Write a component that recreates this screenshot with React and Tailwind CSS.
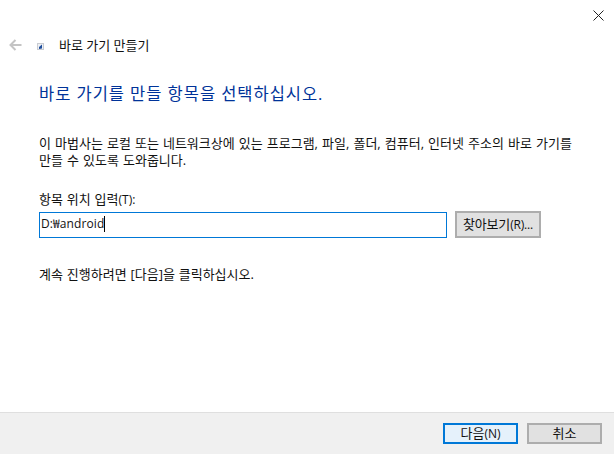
import React from "react";

const font = "font-['Open_Sans','Noto_Sans_CJK_KR',sans-serif]";

const App = () => {
  return (
    <div className={`w-[614px] h-[454px] bg-white flex flex-col text-[13px] leading-[17px] text-[#111] overflow-hidden ${font}`}>
      {/* close */}
      <div className="h-[30px] flex justify-end items-start pt-[10px] pr-[10px]">
        <svg width="11" height="11" viewBox="0 0 11 11" fill="none" stroke="#222" strokeWidth="1">
          <path d="M0.5 0.5L10.5 10.5M10.5 0.5L0.5 10.5" />
        </svg>
      </div>

      {/* title row */}
      <div className="h-[30px] flex items-center pl-[9px]">
        <svg width="13" height="12" viewBox="0 0 13 12" fill="none" stroke="#c4c4c4" strokeWidth="2">
          <path d="M12.5 6H2M6.5 1L1.5 6L6.5 11" />
        </svg>
        <svg className="ml-[15px] mt-[3px]" width="7" height="7" viewBox="0 0 7 7">
          <rect width="7" height="7" fill="#c9ccd2" />
          <rect x="1" y="1" width="5" height="5" fill="#eef0f4" />
          <path d="M2 6V4L5 1.5V5.5Z" fill="#1f4e9c" />
        </svg>
        <span className="ml-[15px]">바로 가기 만들기</span>
      </div>

      {/* body */}
      <div className="flex-1 pl-[39px] pr-[41px] pt-[24px]">
        <h1 className="text-[16.5px] leading-[20px] font-normal text-[#003399] tracking-[0.95px]">
          바로 가기를 만들 항목을 선택하십시오.
        </h1>
        <p className="mt-[31px] w-[540px] [word-spacing:0.7px]">
          이 마법사는 로컬 또는 네트워크상에 있는 프로그램, 파일, 폴더, 컴퓨터, 인터넷 주소의 바로 가기를 만들 수 있도록 도와줍니다.
        </p>
        <div className="mt-[22px] [word-spacing:0.5px]">
          항목 위치 입력<span className="text-[12px]">(T):</span>
        </div>
        <div className="mt-[3px] flex items-center gap-[8px]">
          <div className="w-[408px] h-[26px] border border-[#0078d7] flex items-center pl-[1px] pb-[2px] text-[12px]">
            <span className="tracking-[0.1px]">D:₩android</span>
            <span className="w-px h-[16px] bg-black" />
          </div>
          <button className="w-[86px] h-[27px] border-2 border-[#adadad] bg-[#e1e1e1] text-center leading-none tracking-[-0.2px]">
            찾아보기<span className="text-[12px]">(R)...</span>
          </button>
        </div>
        <p className="mt-[28px] [word-spacing:0.5px]">계속 진행하려면 [다음]을 클릭하십시오.</p>
      </div>

      {/* footer */}
      <div className="h-[42px] border-t border-[#dfdfdf] bg-[#f0f0f0] flex justify-end items-center gap-[9px] pr-[12px]">
        <button className="w-[75px] h-[21px] border-2 border-[#0078d7] bg-[#e5f1fb] leading-none">
          다음<span className="text-[12px]">(N)</span>
        </button>
        <button className="w-[75px] h-[21px] border-2 border-[#adadad] bg-[#e1e1e1] leading-none">취소</button>
      </div>
    </div>
  );
};

export default App;
